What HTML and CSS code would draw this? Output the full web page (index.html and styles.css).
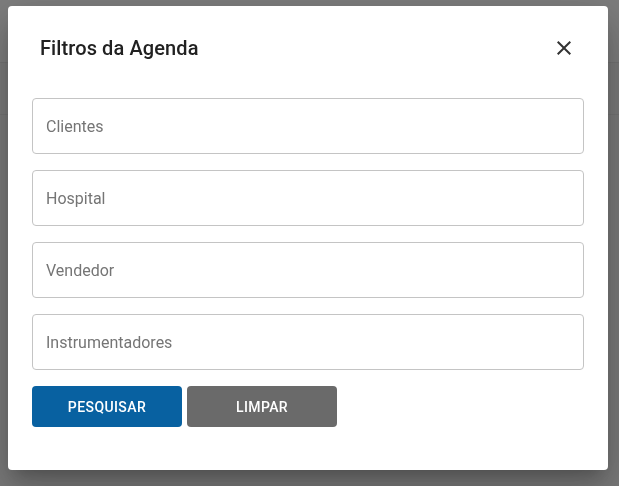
FILE: index.html
```html
<!DOCTYPE html>
<html lang="pt-BR">
<head>
  <meta charset="UTF-8">
  <meta name="viewport" content="width=device-width, initial-scale=1.0">
  <title>Agenda</title>
  <link rel="stylesheet" href="styles.css">
</head>
<body>

  <div class="page">
    <div class="page-header"></div>
    <div class="page-toolbar"></div>
  </div>

  <div class="backdrop">
    <div class="dialog" role="dialog" aria-labelledby="dlg-title">
      <div class="dialog-title">
        <h2 id="dlg-title">Filtros da Agenda</h2>
        <button class="close-btn" aria-label="Fechar">
          <svg width="24" height="24" viewBox="0 0 24 24">
            <path d="M19 6.41 17.59 5 12 10.59 6.41 5 5 6.41 10.59 12 5 17.59 6.41 19 12 13.41 17.59 19 19 17.59 13.41 12z" fill="#333"/>
          </svg>
        </button>
      </div>

      <form class="dialog-body">
        <input type="text" class="field" placeholder="Clientes">
        <input type="text" class="field" placeholder="Hospital">
        <input type="text" class="field" placeholder="Vendedor">
        <input type="text" class="field" placeholder="Instrumentadores">

        <div class="actions">
          <button type="button" class="btn btn-primary">Pesquisar</button>
          <button type="button" class="btn btn-secondary">Limpar</button>
        </div>
      </form>
    </div>
  </div>

</body>
</html>
```

FILE: styles.css
```css
html, body {
  margin: 0;
  height: 100%;
}

body {
  font-family: Roboto, "Liberation Sans", sans-serif;
  background: #f4f4f4;
}

.page {
  height: 100%;
}

.page-header {
  height: 62px;
  border-bottom: 1px solid #e6e6e6;
  background: #fafafa;
}

.page-toolbar {
  height: 51px;
  border-bottom: 1px solid #e6e6e6;
}

.backdrop {
  position: fixed;
  inset: 0;
  background: rgba(0, 0, 0, 0.5);
  display: flex;
  justify-content: flex-start;
  align-items: flex-start;
  padding: 6px 0 0 8px;
}

.dialog {
  width: 600px;
  height: 464px;
  box-sizing: border-box;
  background: #fff;
  border-radius: 4px;
  box-shadow: 0 11px 15px -7px rgba(0,0,0,0.2), 0 24px 38px 3px rgba(0,0,0,0.14), 0 9px 46px 8px rgba(0,0,0,0.12);
}

.dialog-title {
  display: flex;
  align-items: center;
  justify-content: space-between;
  padding: 22px 32px 0 32px;
  height: 40px;
}

.dialog-title h2 {
  margin: 0;
  font-size: 20px;
  font-weight: 500;
  color: #212121;
  letter-spacing: 0.1px;
}

.close-btn {
  border: none;
  background: none;
  padding: 0;
  width: 24px;
  height: 24px;
  cursor: pointer;
}

.dialog-body {
  display: flex;
  flex-direction: column;
  gap: 16px;
  padding: 30px 24px 0 24px;
}

.field {
  height: 56px;
  box-sizing: border-box;
  border: 1px solid #c4c4c4;
  border-radius: 4px;
  padding: 0 13px;
  font-family: Roboto, "Liberation Sans", sans-serif;
  font-size: 16px;
  color: #212121;
  outline: none;
}

.field::placeholder {
  color: #757575;
  opacity: 1;
}

.actions {
  display: flex;
  gap: 5px;
}

.btn {
  width: 150px;
  height: 41px;
  border: none;
  border-radius: 4px;
  color: #fff;
  font-family: Roboto, "Liberation Sans", sans-serif;
  font-size: 14px;
  font-weight: 500;
  text-transform: uppercase;
  letter-spacing: 0.4px;
  cursor: pointer;
}

.btn-primary {
  background: #0861a1;
}

.btn-secondary {
  background: #6a6a6a;
}
```
